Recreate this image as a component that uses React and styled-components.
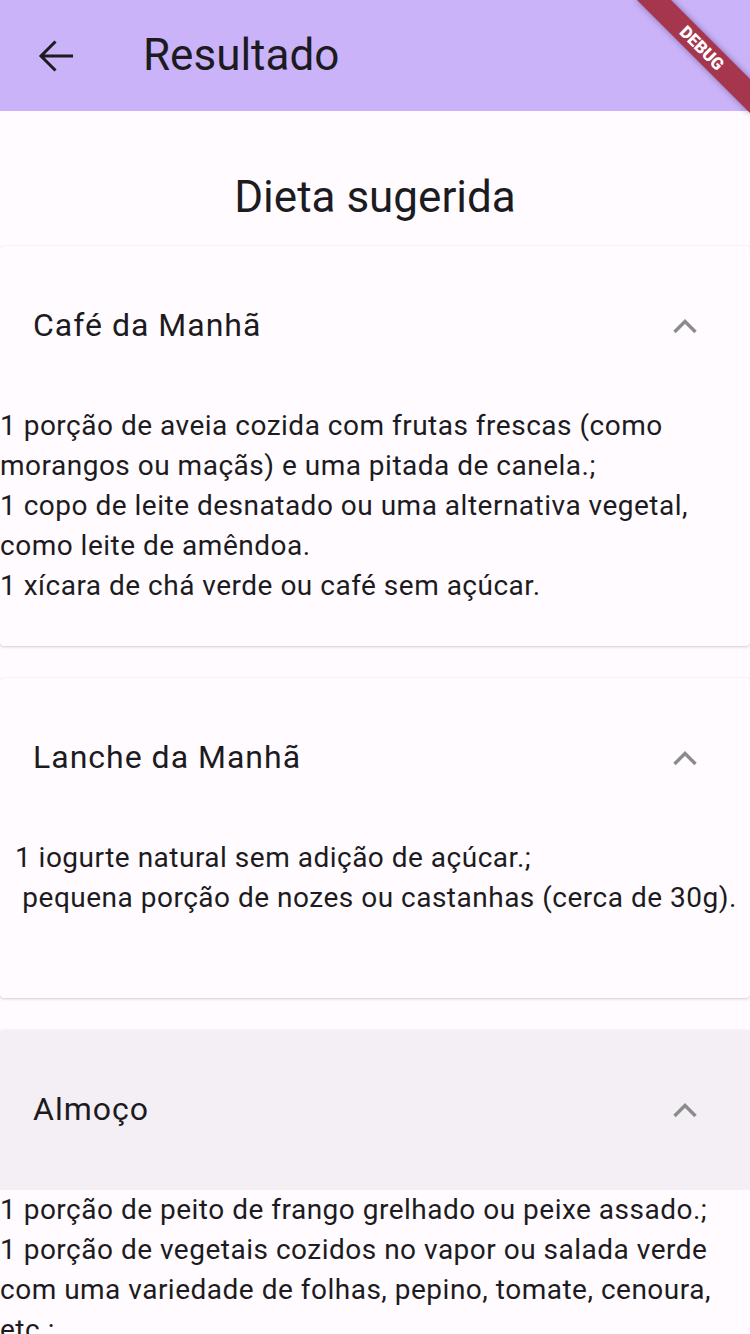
import React from 'react';
import styled, { createGlobalStyle } from 'styled-components';

const GlobalStyle = createGlobalStyle`
    body {
        margin: 0;
        background: #fffbfe;
        font-family: Roboto, "Noto Sans", sans-serif;
        color: #1c1b1f;
    }
`;

const meals = [
    {
        code: 'cafe',
        title: 'Café da Manhã',
        tail: 40,
        lines: [
            '1 porção de aveia cozida com frutas frescas (como',
            'morangos ou maçãs) e uma pitada de canela.;',
            '1 copo de leite desnatado ou uma alternativa vegetal,',
            'como leite de amêndoa.',
            '1 xícara de chá verde ou café sem açúcar.',
        ],
    }, {
        code: 'lanche',
        title: 'Lanche da Manhã',
        tail: 80,
        lines: [
            '  1 iogurte natural sem adição de açúcar.;',
            '   pequena porção de nozes ou castanhas (cerca de 30g).',
        ],
    }, {
        code: 'almoco',
        title: 'Almoço',
        highlighted: true,
        tail: 40,
        lines: [
            '1 porção de peito de frango grelhado ou peixe assado.;',
            '1 porção de vegetais cozidos no vapor ou salada verde',
            'com uma variedade de folhas, pepino, tomate, cenoura,',
            'etc.;',
            '1/2 xícara de arroz integral ou quinoa.',
        ],
    },
];

const Screen = styled.div`
    position: relative;
    width: 750px;
    height: 1334px;
    overflow: hidden;
    background: #fffbfe;
`;

const AppBar = styled.header`
    display: flex;
    align-items: center;
    height: 111px;
    padding-left: 32px;
    background: #cab3f8;
`;

const BackButton = styled.button`
    display: flex;
    align-items: center;
    justify-content: center;
    width: 48px;
    height: 48px;
    padding: 0;
    margin-right: 63px;
    border: 0;
    background: none;
    color: #1c1b1f;
`;

const Title = styled.h1`
    margin: 0 0 2px;
    font-size: 44px;
    font-weight: 400;
    color: #1c1b1f;
`;

// debug ribbon laid over the app bar corner
const Banner = styled.div`
    position: absolute;
    top: 48px;
    left: 702px;
    width: 160px;
    height: 24px;
    margin: -12px 0 0 -80px;
    display: flex;
    align-items: center;
    justify-content: center;
    transform: rotate(45deg);
    background: #a6364e;
    box-shadow: 0 0 6px rgba(60, 20, 80, 0.45);
    color: #fff;
    font-size: 17px;
    font-weight: 900;
    line-height: 1;
`;

const Heading = styled.h2`
    margin: 0;
    padding: 61px 0 24px;
    line-height: 50px;
    font-size: 44px;
    font-weight: 400;
    text-align: center;
`;

const PanelList = styled.div`
    display: flex;
    flex-direction: column;
    gap: 32px;
`;

const Panel = styled.section`
    border-radius: 4px;
    background: #fffbfe;
    box-shadow: 0 1px 3px rgba(0, 0, 0, 0.18), 0 0 1px rgba(0, 0, 0, 0.08);
`;

const PanelHeader = styled.div`
    display: flex;
    align-items: center;
    justify-content: space-between;
    height: 160px;
    padding: 0 53px 0 33px;
    border-radius: 4px 4px 0 0;
    background: ${(p) => (p.$highlighted ? '#f4eff4' : 'transparent')};
`;

const PanelTitle = styled.span`
    margin-bottom: 3px;
    font-size: 32px;
    letter-spacing: 1px;
`;

const PanelBody = styled.div`
    padding-bottom: ${(p) => p.$tail}px;
    font-size: 28px;
    line-height: 40px;
    letter-spacing: 0.5px;
    white-space: pre;
`;

function ArrowBack() {
    return (
        <svg width="48" height="48" viewBox="0 0 48 48" fill="none" stroke="currentColor" strokeWidth="3">
            <path d="M9 24h32M23.5 9.5L9 24l14.5 14.5" />
        </svg>
    );
}

function Chevron() {
    return (
        <svg width="24" height="15" viewBox="0 0 24 15" fill="none" stroke="#8b8b8b" strokeWidth="3.4">
            <path d="M1.5 13L12 2.5 22.5 13" />
        </svg>
    );
}

export default function App() {
    return (
        <Screen>
            <GlobalStyle />
            <AppBar>
                <BackButton aria-label="Voltar">
                    <ArrowBack />
                </BackButton>
                <Title>Resultado</Title>
            </AppBar>
            <Banner>DEBUG</Banner>
            <Heading>Dieta sugerida</Heading>
            <PanelList>
                {meals.map((meal) => (
                    <Panel key={meal.code}>
                        <PanelHeader $highlighted={meal.highlighted}>
                            <PanelTitle>{meal.title}</PanelTitle>
                            <Chevron />
                        </PanelHeader>
                        <PanelBody $tail={meal.tail}>{meal.lines.join('\n')}</PanelBody>
                    </Panel>
                ))}
            </PanelList>
        </Screen>
    );
}
